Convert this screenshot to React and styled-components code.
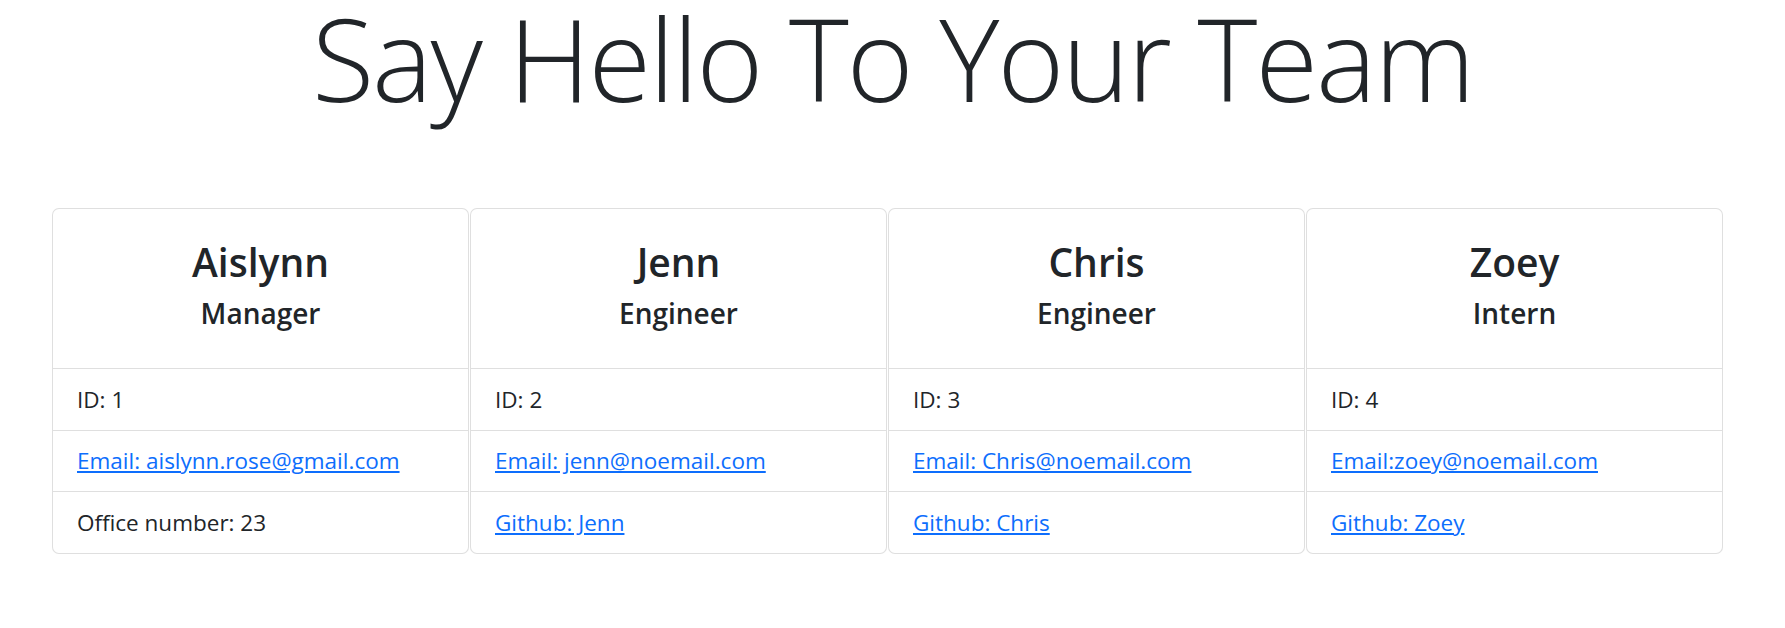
import React from 'react'
import styled, { createGlobalStyle } from 'styled-components'

const GlobalStyle = createGlobalStyle`
  *, *::before, *::after {
    box-sizing: border-box;
  }

  body {
    margin: 0;
    background: #fff;
    color: #212529;
    font-family: "Open Sans", "Noto Sans", "Liberation Sans", sans-serif;
    font-size: 22.5px;
  }
`

const Page = styled.main`
  display: flex;
  flex-direction: column;
`

const Title = styled.h1`
  margin: 0 0 92px;
  font-size: 114px;
  font-weight: 300;
  letter-spacing: -2px;
  line-height: 116px;
  text-align: center;
  color: #212529;
`

const Deck = styled.div`
  display: flex;
  gap: 1px;
  padding-left: 52px;
`

const Card = styled.div`
  width: 417px;
  border: 1px solid rgba(0, 0, 0, 0.125);
  border-radius: 7px;
  display: flex;
  flex-direction: column;
  background: #fff;
`

const CardBody = styled.div`
  padding: 28px 24px 25px;
  text-align: center;
`

const Name = styled.h3`
  margin: 0 0 8px;
  font-size: 39px;
  font-weight: 600;
  line-height: 50px;
`

const Role = styled.h5`
  margin: 0 0 12px;
  font-size: 28px;
  font-weight: 600;
  line-height: 36px;
`

const List = styled.ul`
  list-style: none;
  margin: 0;
  padding: 0;
`

const Item = styled.li`
  border-top: 1px solid rgba(0, 0, 0, 0.125);
  padding: 12.5px 24px 12px 24px;
  line-height: 36px;
  font-size: 22.5px;
`

const Link = styled.a`
  color: #0d6efd;
  text-decoration: underline;
  text-underline-offset: 2px;
`

const team = [
  { name: 'Aislynn', role: 'Manager', id: 1, email: 'Email: aislynn.rose@gmail.com', extra: 'Office number: 23' },
  { name: 'Jenn', role: 'Engineer', id: 2, email: 'Email: jenn@noemail.com', github: 'Github: Jenn' },
  { name: 'Chris', role: 'Engineer', id: 3, email: 'Email: Chris@noemail.com', github: 'Github: Chris' },
  { name: 'Zoey', role: 'Intern', id: 4, email: 'Email:zoey@noemail.com', github: 'Github: Zoey' },
]

export default function App() {
  return (
    <Page>
      <GlobalStyle />
      <Title>Say Hello To Your Team</Title>
      <Deck>
        {team.map((m) => (
          <Card key={m.id}>
            <CardBody>
              <Name>{m.name}</Name>
              <Role>{m.role}</Role>
            </CardBody>
            <List>
              <Item>ID: {m.id}</Item>
              <Item>
                <Link href="#">{m.email}</Link>
              </Item>
              <Item>{m.github ? <Link href="#">{m.github}</Link> : m.extra}</Item>
            </List>
          </Card>
        ))}
      </Deck>
    </Page>
  )
}
